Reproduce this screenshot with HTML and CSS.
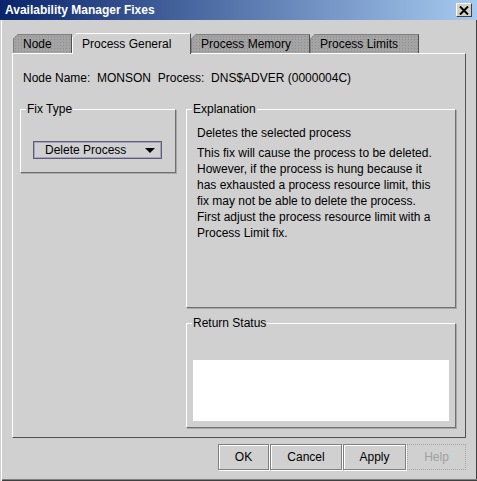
FILE: index.html
```html
<!DOCTYPE html>
<html lang="en">
<head>
    <meta charset="UTF-8">
    <title>Availability Manager Fixes</title>
    <link rel="stylesheet" href="styles.css">
</head>
<body>
    <div class="window">
        <div class="titlebar">
            <span class="title">Availability Manager Fixes</span>
            <span class="close">
                <svg width="10" height="9" viewBox="0 0 10 9"><path d="M1 0.5 L9 8.5 M9 0.5 L1 8.5" stroke="#000" stroke-width="2"/></svg>
            </span>
        </div>
        <div class="content">
            <div class="tabs">
                <div class="tab tab-node">Node</div>
                <div class="tab tab-general active">Process General</div>
                <div class="tab tab-memory">Process Memory</div>
                <div class="tab tab-limits">Process Limits</div>
            </div>
            <div class="panel">
                <div class="info">Node Name:&nbsp; MONSON&nbsp; Process:&nbsp; DNS$ADVER (0000004C)</div>
                <div class="groups">
                    <fieldset class="group fix-type">
                        <legend>Fix Type</legend>
                        <div class="combo">
                            <span class="combo-text">Delete Process</span>
                            <span class="arrow"></span>
                        </div>
                    </fieldset>
                    <div class="right-col">
                        <fieldset class="group explanation">
                            <legend>Explanation</legend>
                            <div class="exp-title">Deletes the selected process</div>
                            <div class="exp-text">This fix will cause the process to be deleted.<br>However, if the process is hung because it<br>has exhausted a process resource limit, this<br>fix may not be able to delete the process.<br>First adjust the process resource limit with a<br>Process Limit fix.</div>
                        </fieldset>
                        <fieldset class="group return-status">
                            <legend>Return Status</legend>
                            <div class="status-box"></div>
                        </fieldset>
                    </div>
                </div>
            </div>
            <div class="buttons">
                <button class="btn btn-ok">OK</button>
                <button class="btn btn-cancel">Cancel</button>
                <button class="btn btn-apply">Apply</button>
                <button class="btn btn-help" disabled>Help</button>
            </div>
        </div>
    </div>
</body>
</html>
```
FILE: styles.css
```css
* {
    box-sizing: border-box;
}
body {
    margin: 0;
    font-family: 'Liberation Sans', Arial, sans-serif;
    font-size: 12px;
    color: #000000;
}
.window {
    width: 477px;
    height: 481px;
    background-color: #d0d0d0;
    box-shadow: inset 1px 0 0 #d0d0d0, inset 2px 0 0 #ffffff, inset 0 -1px 0 #404040, inset 0 -2px 0 #808080, inset -1px 0 0 #404040;
    overflow: hidden;
}
.titlebar {
    height: 20px;
    display: flex;
    align-items: center;
    justify-content: space-between;
    padding: 0 5px 0 5px;
    background: linear-gradient(to right, #0a246a, #a6caf0);
}
.title {
    color: #ffffff;
    font-weight: bold;
    font-size: 12px;
}
.close {
    width: 16px;
    height: 14px;
    display: flex;
    align-items: center;
    justify-content: center;
    background-color: #d4d0c8;
    border: 1px solid;
    border-color: #ffffff #404040 #404040 #ffffff;
}
.content {
    padding: 13px 11px 0 12px;
}
.tabs {
    display: flex;
    align-items: flex-end;
    height: 20px;
    padding-left: 1px;
}
.tab {
    height: 19px;
    padding-left: 9px;
    line-height: 18px;
    white-space: nowrap;
    border: 1px solid;
    border-bottom: none;
    border-color: #808080 #505050 transparent #808080;
    background-color: #a4a4a4;
    background-image: radial-gradient(#8c8c8c 0.6px, transparent 0.8px);
    background-size: 3px 3px;
    clip-path: polygon(5px 0, 100% 0, 100% 100%, 0 100%, 0 5px);
    position: relative;
}
.tab::before {
    content: "";
    position: absolute;
    left: -2px;
    top: 1px;
    width: 7px;
    height: 1px;
    background-color: #808080;
    transform: rotate(-45deg);
}
.tab.active {
    height: 21px;
    margin-bottom: -1px;
    z-index: 1;
    line-height: 20px;
    background: #d0d0d0;
    border-color: #ffffff #505050 transparent #ffffff;
}
.tab.active::before {
    background-color: #ffffff;
}
.tab-node { width: 59px; }
.tab-general { width: 119px; }
.tab-memory { width: 119px; }
.tab-limits { width: 109px; }
.panel {
    height: 385px;
    border: 1px solid;
    border-color: #ffffff #505050 #505050 #ffffff;
    padding: 17px 9px 0 7px;
}
.info {
    margin-left: 3px;
    line-height: 14px;
    white-space: nowrap;
}
.groups {
    display: grid;
    grid-template-columns: 156px 270px;
    column-gap: 10px;
    align-items: start;
    margin-top: 17px;
}
.group {
    margin: 0;
    padding: 0;
    min-width: 0;
    border: 1px solid;
    border-color: #ffffff #707070 #707070 #ffffff;
    box-shadow: 1px 1px 0 #a8a8a8;
}
.group legend {
    padding: 0 1px;
    margin-left: 5px;
    line-height: 14px;
}
.fix-type {
    height: 71px;
}
.combo {
    width: 129px;
    height: 18px;
    margin: 25px 0 0 12px;
    display: flex;
    align-items: center;
    justify-content: space-between;
    padding: 0 6px 0 11px;
    border: 1px solid #606060;
    box-shadow: inset 0 0 0 1px #a0a0d8;
}
.arrow {
    width: 0;
    height: 0;
    border-left: 5px solid transparent;
    border-right: 5px solid transparent;
    border-top: 5px solid #000000;
}
.right-col {
    display: flex;
    flex-direction: column;
    gap: 8px;
}
.explanation {
    height: 206px;
}
.exp-title {
    margin: 9px 0 0 10px;
    line-height: 16px;
}
.exp-text {
    margin: 4px 0 0 10px;
    line-height: 16px;
    white-space: nowrap;
}
.return-status {
    height: 112px;
}
.status-box {
    height: 61px;
    margin: 30px 6px 0 6px;
    background-color: #ffffff;
}
.buttons {
    display: flex;
    justify-content: flex-end;
    gap: 1px;
    margin-top: 6px;
}
.btn {
    height: 26px;
    font-family: inherit;
    font-size: 12px;
    color: #000000;
    background-color: #d0d0d0;
    border: 1px solid #808080;
    box-shadow: inset 1px 1px 0 #ffffff, 1px 1px 0 #ffffff;
    padding: 0;
}
.btn-ok { width: 51px; }
.btn-cancel { width: 72px; }
.btn-apply { width: 63px; }
.btn-help {
    width: 59px;
    color: #a0a0a0;
    border: 1px dotted #a8a8a8;
    box-shadow: none;
}
```
